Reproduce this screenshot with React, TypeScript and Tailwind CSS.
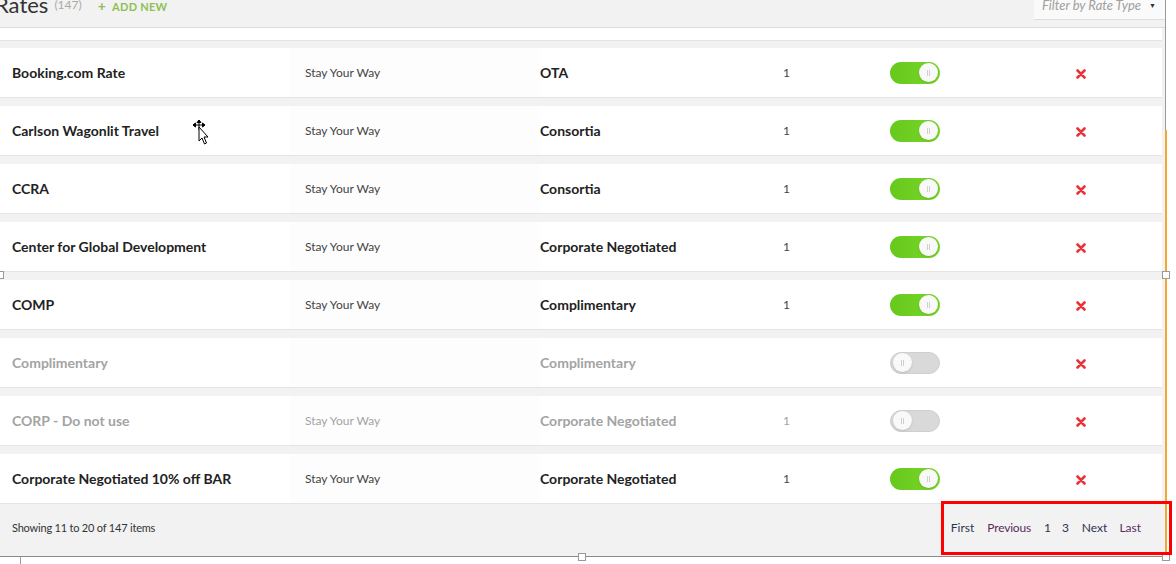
import React from 'react'

interface RateRow {
  name: string
  channel: string
  type: string
  count: string
  on: boolean
}

const ROWS: RateRow[] = [
  { name: 'Booking.com Rate',               channel: 'Stay Your Way', type: 'OTA',                  count: '1', on: true },
  { name: 'Carlson Wagonlit Travel',        channel: 'Stay Your Way', type: 'Consortia',            count: '1', on: true },
  { name: 'CCRA',                           channel: 'Stay Your Way', type: 'Consortia',            count: '1', on: true },
  { name: 'Center for Global Development',  channel: 'Stay Your Way', type: 'Corporate Negotiated', count: '1', on: true },
  { name: 'COMP',                           channel: 'Stay Your Way', type: 'Complimentary',        count: '1', on: true },
  { name: 'Complimentary',                  channel: '',              type: 'Complimentary',        count: '',  on: false },
  { name: 'CORP - Do not use',              channel: 'Stay Your Way', type: 'Corporate Negotiated', count: '1', on: false },
  { name: 'Corporate Negotiated 10% off BAR', channel: 'Stay Your Way', type: 'Corporate Negotiated', count: '1', on: true },
]

function Toggle({ on }: { on: boolean }) {
  return (
    <div className={`w-[50px] h-[22px] rounded-full flex items-center px-[2px] ${
      on ? 'bg-gradient-to-r from-[#66c91c] to-[#7ad62a] justify-end' : 'bg-[#d9d9d9] justify-start border border-[#cfcfcf]'
    }`}>
      <div className="w-[19px] h-[19px] rounded-full bg-[#f9f9f9] flex items-center justify-center gap-[1px] shadow-sm">
        <span className="w-px h-[6px] bg-[#d0d0d0]" />
        <span className="w-px h-[6px] bg-[#d0d0d0]" />
      </div>
    </div>
  )
}

function RemoveIcon() {
  return (
    <svg width="10" height="10" viewBox="0 0 10 10" aria-hidden="true">
      <path d="M1.5 1.5 L8.5 8.5 M8.5 1.5 L1.5 8.5" stroke="#e8333a" strokeWidth="2.6" strokeLinecap="round" />
    </svg>
  )
}

function Row({ row }: { row: RateRow }) {
  const strong = row.on ? 'text-[#222]' : 'text-[#a3a3a3]'
  const soft = row.on ? 'text-[#444]' : 'text-[#a3a3a3]'
  return (
    <div className="h-[50px] bg-white border-b border-[#e4e4e4] flex items-center">
      <div className={`w-[290px] pl-[12px] text-[14px] font-bold ${strong}`}>{row.name}</div>
      <div className={`w-[250px] pl-[15px] text-[12px] bg-[#fdfdfd] h-full flex items-center ${soft}`}>{row.channel}</div>
      <div className={`w-[243px] text-[14px] font-bold ${strong}`}>{row.type}</div>
      <div className={`w-[107px] text-[12px] ${soft}`}>{row.count}</div>
      <div className="w-[186px]"><Toggle on={row.on} /></div>
      <div className="pt-[3px]"><RemoveIcon /></div>
    </div>
  )
}

export default function App() {
  return (
    <div className="w-[1176px] h-[564px] relative overflow-hidden bg-white" style={{ fontFamily: 'Lato, "Noto Sans", sans-serif' }}>
      <div className="w-[1166px] h-[557px] bg-[#f2f2f2] border-r border-[#9a9a9a] border-b border-b-[#8a8a8a] flex flex-col">
        {/* header */}
        <div className="h-[28px] border-b border-[#dcdcdc] flex items-start justify-between shrink-0 overflow-hidden">
          <div className="flex items-center mt-[-11px] ml-[-5px]">
            <span className="text-[22px] text-[#333] leading-[32px]">Rates</span>
            <span className="text-[12px] text-[#aaa] ml-[6px]">(147)</span>
            <span className="text-[11px] font-bold text-[#8cc152] ml-[16px] tracking-wide">
              <span className="text-[14px] mr-[6px]">+</span>ADD NEW
            </span>
          </div>
          <div className="w-[131px] h-[20px] bg-[#fafafa] border-b border-[#dedede] flex items-center justify-between pl-[8px] pr-[9px]">
            <span className="text-[13px] italic text-[#a0a0a0] mt-[-8px]">Filter by Rate Type</span>
            <span className="text-[7px] text-[#333] mt-[-8px]">▼</span>
          </div>
        </div>
        <div className="h-[13px] bg-white border-b border-[#e4e4e4] mr-[3px] shrink-0" />

        {/* rows */}
        <div className="flex flex-col gap-[8px] pt-[7px] mr-[3px]">
          {ROWS.map(r => <Row key={r.name} row={r} />)}
        </div>

        {/* footer */}
        <div className="flex-1 flex items-center justify-between pl-[12px] pb-[4px]">
          <span className="text-[11px] tracking-[-0.2px] text-[#333]">Showing 11 to 20 of 147 items</span>
          <div className="flex items-center text-[12px] mr-[24px]">
            <span className="text-[#2c3550]">First</span>
            <span className="text-[#5b2c5e] ml-[13px] tracking-[-0.2px]">Previous</span>
            <span className="text-[#2c3550] ml-[13px]">1</span>
            <span className="text-[#2c3550] ml-[11px]">3</span>
            <span className="text-[#2c3550] ml-[13px]">Next</span>
            <span className="text-[#5b2c5e] ml-[12px]">Last</span>
          </div>
        </div>
      </div>

      {/* selection overlay */}
      <div className="absolute left-[1165px] top-[130px] w-[2px] h-[427px] bg-[#f0a830]" />
      <div className="absolute left-[20px] top-[557px] w-px h-[7px] bg-[#9a9a9a]" />
      <div className="absolute left-[1162px] top-[271px] w-[8px] h-[8px] bg-white border border-[#999]" />
      <div className="absolute left-[-4px] top-[271px] w-[8px] h-[8px] bg-white border border-[#999]" />
      <div className="absolute left-[578px] top-[553px] w-[8px] h-[8px] bg-white border border-[#999]" />
      <div className="absolute left-[1162px] top-[553px] w-[8px] h-[8px] bg-white border border-[#999]" />
      <div className="absolute left-[941px] top-[501px] w-[231px] h-[54px] border-[3px] border-[#ff0000]" />

      {/* cursor */}
      <svg className="absolute left-[189px] top-[119px]" width="24" height="28" viewBox="0 0 24 28" aria-hidden="true">
        <path d="M10 1 L10 11 M4 6 L16 6 M10 1 L8 3.5 L12 3.5 Z M4 6 L6.5 4 L6.5 8 Z M16 6 L13.5 4 L13.5 8 Z" stroke="#000" strokeWidth="1" fill="#000" />
        <path d="M10 8 L10 22 L13 19 L15.5 25 L17.5 24 L15 18 L19 18 Z" fill="#fff" stroke="#000" strokeWidth="1" />
      </svg>
    </div>
  )
}
